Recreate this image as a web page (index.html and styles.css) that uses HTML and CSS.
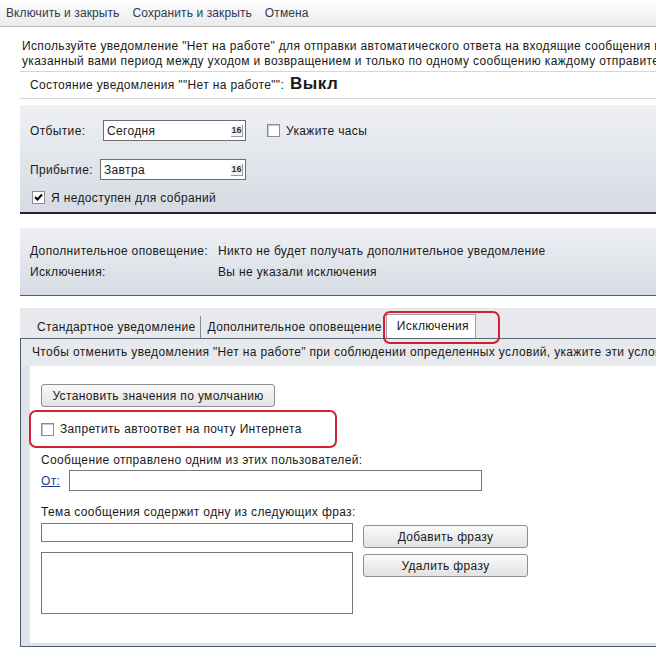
FILE: index.html
```html
<!DOCTYPE html>
<html lang="ru">
<head>
    <meta charset="UTF-8">
    <title>Нет на работе</title>
    <link rel="stylesheet" href="styles.css">
</head>
<body>
<div class="toolbar">
    <a class="tool">Включить и закрыть</a>
    <a class="tool">Сохранить и закрыть</a>
    <a class="tool">Отмена</a>
</div>

<div class="content">
    <div class="intro">
        <div>Используйте уведомление "Нет на работе" для отправки автоматического ответа на входящие сообщения в течение</div>
        <div>указанный вами период между уходом и возвращением и только по одному сообщению каждому отправителю.</div>
    </div>

    <div class="status">
        <span>Состояние уведомления ""Нет на работе"":</span>
        <strong class="state">Выкл</strong>
    </div>

    <div class="panel dates">
        <div class="date-row">
            <label class="date-label">Отбытие:</label>
            <div class="date-input">Сегодня<span class="cal">16</span></div>
            <span class="check"></span>
            <span>Укажите часы</span>
        </div>
        <div class="date-row second">
            <label class="date-label">Прибытие:</label>
            <div class="date-input wide">Завтра<span class="cal">16</span></div>
        </div>
        <div class="check-row">
            <span class="check checked"><svg width="9" height="9" viewBox="0 0 9 9"><path d="M1 4 L3.5 6.5 L8 1.5" stroke="#000" stroke-width="2" fill="none"/></svg></span>
            <span>Я недоступен для собраний</span>
        </div>
    </div>

    <div class="panel extra">
        <div class="info-row"><span class="info-key">Дополнительное оповещение:</span><span>Никто не будет получать дополнительное уведомление</span></div>
        <div class="info-row"><span class="info-key">Исключения:</span><span>Вы не указали исключения</span></div>
    </div>

    <div class="tabs">
        <span class="tab first">Стандартное уведомление</span>
        <span class="tab">Дополнительное оповещение</span>
        <span class="tab active">Исключения</span>
        <span class="mark tab-mark"></span>
    </div>

    <div class="tab-panel">
        <div class="tab-note">Чтобы отменить уведомления "Нет на работе" при соблюдении определенных условий, укажите эти условия ниже.</div>
        <div class="tab-body">
            <div class="inner">
                <button type="button" class="btn default-btn">Установить значения по умолчанию</button>
                <div class="mark block-mark">
                    <span class="check"></span>
                    <span>Запретить автоответ на почту Интернета</span>
                </div>
                <div class="field-label">Сообщение отправлено одним из этих пользователей:</div>
                <div class="from-row">
                    <a class="from-link">От:</a>
                    <div class="text-box from-box"></div>
                </div>
                <div class="field-label subject-label">Тема сообщения содержит одну из следующих фраз:</div>
                <div class="phrases">
                    <div class="phrase-fields">
                        <div class="text-box phrase-box"></div>
                        <div class="text-box phrase-list"></div>
                    </div>
                    <div class="phrase-buttons">
                        <button type="button" class="btn phrase-btn">Добавить фразу</button>
                        <button type="button" class="btn phrase-btn">Удалить фразу</button>
                    </div>
                </div>
            </div>
        </div>
    </div>
</div>
</body>
</html>
```

FILE: styles.css
```css
body {
    margin: 0;
    width: 656px;
    height: 657px;
    overflow: hidden;
    font-family: "Liberation Sans", Arial, sans-serif;
    font-size: 12px;
    letter-spacing: 0.35px;
    color: #1a1a1a;
    background: #fff;
    white-space: nowrap;
}

.toolbar {
    height: 26px;
    display: flex;
    align-items: center;
    gap: 13px;
    padding-left: 6px;
    background: linear-gradient(#ffffff, #eaeaea);
    border-bottom: 1px solid #b9b9b9;
    letter-spacing: 0.1px;
}
.tool {
    color: #2e3b52;
}

.content {
    margin-left: 20px;
    width: 760px;
}

.intro {
    padding: 12px 0 2px 2px;
    line-height: 15px;
    border-bottom: 1px solid #d6d6d6;
}

.status {
    height: 26px;
    display: flex;
    align-items: center;
    padding-left: 10px;
    border-bottom: 1px solid #d6d6d6;
}
.state {
    margin-left: 6px;
    font-size: 17px;
    letter-spacing: 0.5px;
    position: relative;
    top: -1px;
}

.panel {
    background: linear-gradient(#eef0f4, #d6dbe3);
}
.dates {
    margin-top: 6px;
    height: 109px;
    padding-left: 10px;
    border-bottom: 2px solid #1f2630;
    box-sizing: border-box;
    padding-top: 15px;
}
.date-row {
    display: flex;
    align-items: center;
    height: 21px;
}
.date-row.second {
    margin-top: 18px;
}
.date-label {
    width: 73px;
}
.second .date-label {
    width: 70px;
}
.date-input {
    width: 136px;
    height: 19px;
    border: 1px solid #6d6d6d;
    background: #fff;
    display: flex;
    align-items: center;
    justify-content: space-between;
    padding: 0 2px 0 3px;
    margin-right: 21px;
}
.date-input.wide {
    width: 139px;
}
.cal {
    font-size: 9px;
    font-weight: bold;
    letter-spacing: 0;
    width: 11px;
    height: 11px;
    line-height: 11px;
    text-align: center;
    border-right: 1px solid #9a9a9a;
    border-bottom: 1px solid #9a9a9a;
    background: #f4f4f4;
    color: #333;
}

.check {
    display: inline-flex;
    align-items: center;
    justify-content: center;
    width: 11px;
    height: 11px;
    border: 1px solid #8c8c8c;
    box-shadow: inset 1px 1px 0 #c8c8c8;
    background: #fff;
    margin-right: 6px;
}
.checked {
    box-shadow: none;
}
.check-row {
    display: flex;
    align-items: center;
    height: 15px;
    margin-top: 10px;
    padding-left: 2px;
}

.extra {
    margin-top: 14px;
    height: 68px;
    box-sizing: border-box;
    padding: 16px 0 0 10px;
    border-bottom: 1px solid #4f5a6a;
}
.info-row {
    display: flex;
    line-height: 15px;
    margin-bottom: 6px;
}
.info-key {
    width: 188px;
}

.tabs {
    position: relative;
    margin-top: 12px;
    height: 30px;
    box-sizing: border-box;
    padding: 8px 0 0 10px;
    background: #e8e9ed;
    display: flex;
    align-items: flex-end;
}
.tab {
    height: 22px;
    line-height: 23px;
    padding: 0 1px 0 7px;
    border-right: 1px solid #8a8a8a;
}
.tab.first {
    padding-right: 4px;
}
.tab.active {
    height: 23px;
    margin-left: 2px;
    padding: 0 6px 0 10px;
    background: #fff;
    border: 1px solid #a0a0a0;
    border-bottom: none;
}

.mark {
    border: 2px solid #d3212f;
    border-radius: 7px;
}
.tab-mark {
    position: absolute;
    left: 363px;
    top: 3px;
    width: 113px;
    height: 29px;
}

.tab-panel {
    border-top: 1px solid #5a6678;
    border-left: 1px solid #4d5a6c;
    border-bottom: 1px solid #4d5a6c;
    background: #dfe3ea;
}
.tab-note {
    height: 27px;
    line-height: 27px;
    padding-left: 11px;
    background: #e8e9ed;
}
.tab-body {
    padding: 0 0 3px 9px;
}
.inner {
    background: #fff;
    height: 277px;
    padding-left: 11px;
    padding-top: 18px;
    box-sizing: border-box;
}

.btn {
    font-family: "Liberation Sans", Arial, sans-serif;
    font-size: 12px;
    letter-spacing: 0.35px;
    color: #1a1a1a;
    height: 23px;
    border: 1px solid #8e8e8e;
    border-radius: 3px;
    background: linear-gradient(#fafafa, #e2e2e2);
    padding: 0;
}
.default-btn {
    display: block;
    width: 234px;
}

.block-mark {
    box-sizing: border-box;
    margin: 3px 0 0 -12px;
    width: 308px;
    height: 38px;
    display: flex;
    align-items: center;
    padding-left: 10px;
}

.field-label {
    margin-top: 5px;
    line-height: 15px;
}
.from-row {
    display: flex;
    align-items: center;
    margin-top: 2px;
}
.from-link {
    color: #1c3a9e;
    text-decoration: underline;
    width: 28px;
}
.text-box {
    border: 1px solid #777;
    background: #fff;
    box-sizing: border-box;
}
.from-box {
    width: 413px;
    height: 21px;
}
.subject-label {
    margin-top: 14px;
}

.phrases {
    display: flex;
    gap: 10px;
    margin-top: 3px;
}
.phrase-fields {
    display: flex;
    flex-direction: column;
    gap: 10px;
}
.phrase-box {
    width: 312px;
    height: 19px;
}
.phrase-list {
    width: 312px;
    height: 62px;
}
.phrase-buttons {
    display: flex;
    flex-direction: column;
    gap: 6px;
    padding-top: 2px;
}
.phrase-btn {
    width: 165px;
}
```
